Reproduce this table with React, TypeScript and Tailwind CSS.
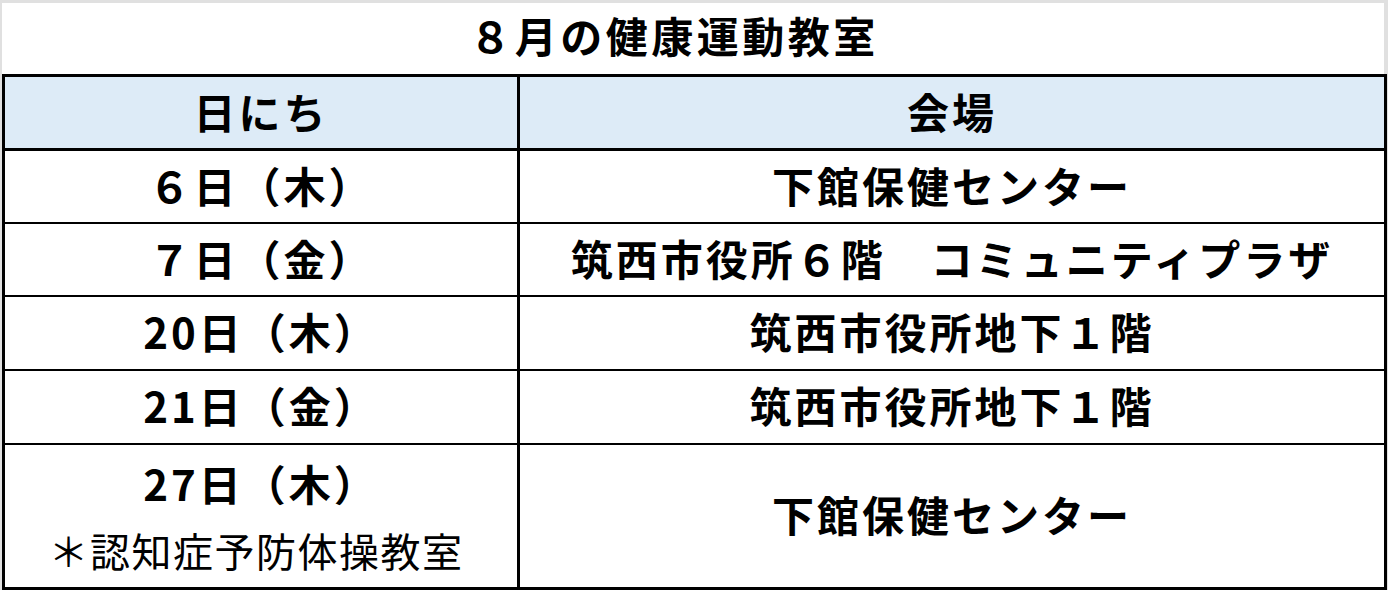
import React from "react";

const font = { fontFamily: '"Noto Sans CJK JP", "Noto Sans", sans-serif' };

function Cell({
  children,
  left,
  h,
  last,
  thickBottom,
  bg,
}: {
  children?: React.ReactNode;
  left?: boolean;
  h: string;
  last?: boolean;
  thickBottom?: boolean;
  bg?: boolean;
}) {
  const cls = [
    "flex items-center justify-center text-[42px] font-bold tracking-[3px] text-black leading-none pb-[4px]",
    left ? "border-r-[3px] border-black" : "",
    last ? "" : thickBottom ? "border-b-[3px] border-black" : "border-b-2 border-black",
    bg ? "bg-[#ddebf7]" : "bg-white",
    h,
  ].join(" ");
  return <div className={cls}>{children}</div>;
}

export default function App() {
  return (
    <div className="w-[1388px] h-[590px] bg-[#e0e0e0] pt-[3px] pl-[2px] pr-[1px] flex flex-col overflow-hidden" style={font}>
      <div className="h-[71px] mr-[3px] bg-white flex items-center justify-center text-[42px] font-bold tracking-[3.5px] text-black leading-none pr-[38px] pb-[8px]">
        ８月の健康運動教室
      </div>
      <div className="border-[3px] border-black grid grid-cols-[515px_1fr] bg-white">
        <Cell left h="h-[74px]" thickBottom bg>日にち</Cell>
        <Cell h="h-[74px]" thickBottom bg>会場</Cell>

        <Cell left h="h-[73px]">６日（木）</Cell>
        <Cell h="h-[73px]">下館保健センター</Cell>

        <Cell left h="h-[73px]">７日（金）</Cell>
        <Cell h="h-[73px]">筑西市役所６階　コミュニティプラザ</Cell>

        <Cell left h="h-[74px]">20日（木）</Cell>
        <Cell h="h-[74px]">筑西市役所地下１階</Cell>

        <Cell left h="h-[74px]">21日（金）</Cell>
        <Cell h="h-[74px]">筑西市役所地下１階</Cell>

        <div className="border-r-[3px] border-black h-[142px] flex flex-col items-center justify-center text-black">
          <div className="text-[42px] font-bold tracking-[3px] leading-none">27日（木）</div>
          <div className="text-[40px] font-normal tracking-[1.5px] leading-none mt-[26px] pr-[10px]">＊認知症予防体操教室</div>
        </div>
        <Cell h="h-[142px]" last>下館保健センター</Cell>
      </div>
    </div>
  );
}
